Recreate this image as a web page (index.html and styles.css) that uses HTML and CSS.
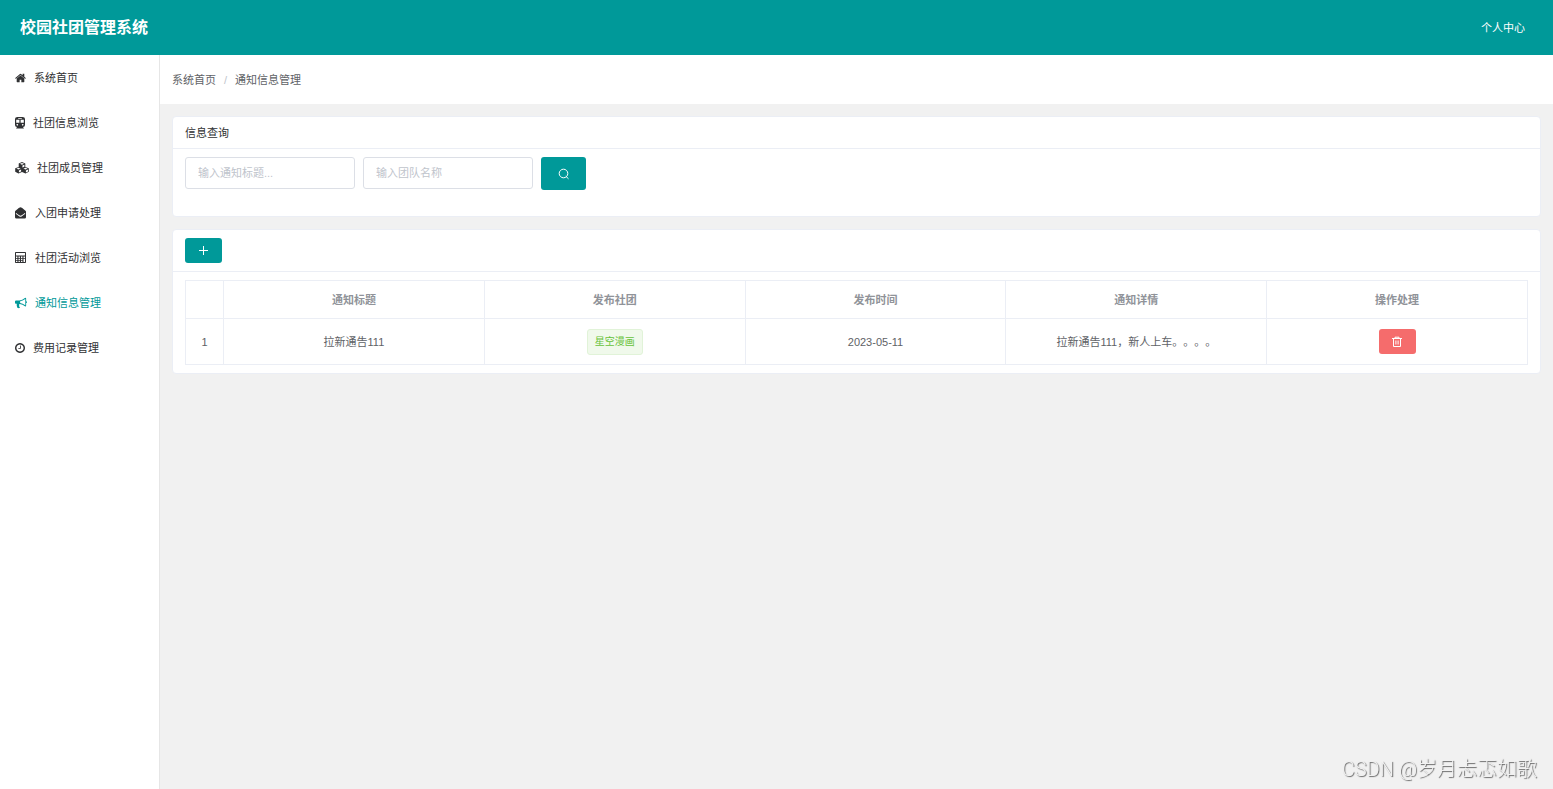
FILE: index.html
```html
<!DOCTYPE html>
<html lang="zh-CN">
<head>
<meta charset="utf-8">
<title>校园社团管理系统</title>
<meta name="viewport" content="width=device-width, initial-scale=1">
<link rel="stylesheet" href="styles.css">
</head>
<body>
<div class="app">
  <header class="topbar">
    <h1 class="brand">校园社团管理系统</h1>
    <a class="profile" href="#">个人中心</a>
  </header>
  <div class="body">
    <nav class="sidebar">
      <a class="item" href="#">
        <svg class="icon" viewBox="64 0 1664 1792" width="11" height="12"><path d="M1472 992v480q0 26-19 45t-45 19h-384v-384h-256v384h-384q-26 0-45-19t-19-45v-480q0-1 .5-3t.5-3l575-474 575 474q1 2 1 6zm223-69l-62 74q-8 9-21 11h-3q-13 0-21-7l-692-577-692 577q-12 8-24 7-13-2-21-11l-62-74q-8-10-7-23.5t11-21.5l719-599q32-26 76-26t76 26l244 204v-195q0-14 9-23t23-9h192q14 0 23 9t9 23v408l219 182q10 8 11 21.5t-7 23.5z"/></svg>
        <span>系统首页</span>
      </a>
      <a class="item" href="#">
        <svg class="icon" viewBox="0 0 10 12" width="10" height="12"><path fill-rule="evenodd" d="M2.500 0h5Q10 0 10 2v6q0 1.800-2 2L9 11.500H1L2 10Q0 9.800 0 8V2Q0 0 2.500 0zM3.200.9v.8h3.600V.9zM1.200 2.800v3h3.200v-3zM5.600 2.800v3h3.200v-3zM2.300 6.900a.8.800 0 1 0 .01 0zM7.700 6.900a.8.800 0 1 0 .01 0z"/></svg>
        <span>社团信息浏览</span>
      </a>
      <a class="item" href="#">
        <svg class="icon" viewBox="0 0 14 12" width="14" height="12"><path fill-rule="evenodd" d="M7 0l3.300 1.400v3.500l3.500 1.400v3.500L10.500 11.500 7 9.900l-3.500 1.600L.2 9.800V6.300l3.500-1.400V1.400zM7 .9L4.900 1.800 7 2.700l2.100-.9zM7.400 3.500v2l2-.8v-2zM3.500 5.800l-2.100.9 2.100.9 2.100-.9zM3.900 8.400v2.100l2.200-1V7.500zM10.500 5.800l-2.100.9 2.100.9 2.100-.9zM10.900 8.400v2.100l2.100-1V7.500z"/></svg>
        <span>社团成员管理</span>
      </a>
      <a class="item" href="#">
        <svg class="icon" viewBox="0 0 12 12" width="12" height="12"><path fill-rule="evenodd" d="M5.500.3Q6.500.3 10.500 3.700q.5.400.5.900v5.600q0 1.300-1.300 1.300H1.400Q0 11.500 0 10.200V4.600q0-.5.500-.9Q4.500.3 5.500.3zM1.200 6l-.5.700Q4.500 9.800 5.500 9.800T10.300 6.700L9.800 6Q6.500 8.700 5.500 8.700T1.200 6z"/></svg>
        <span>入团申请处理</span>
      </a>
      <a class="item" href="#">
        <svg class="icon" viewBox="0 0 12 12" width="12" height="12"><path fill-rule="evenodd" d="M.8 0h9.400q.8 0 .8.800v9.400q0 .8-.8.800H.8Q0 11 0 10.200V.8Q0 0 .8 0zM1 1v2.400h9V1zM1 4.500V6h1.400V4.500zM3.500 4.500V6h1.400V4.500zM6 4.500V6h1.400V4.500zM8.500 4.500V6H10V4.500zM1 6.800v1.400h1.400V6.800zM3.500 6.800v1.400h1.400V6.800zM6 6.800v1.400h1.400V6.800zM1 9v1h1.400V9zM3.500 9v1h1.400V9zM6 9v1h1.400V9zM8.500 6.800V10H10V6.800z"/></svg>
        <span>社团活动浏览</span>
      </a>
      <a class="item active" href="#" aria-current="page">
        <svg class="icon" viewBox="0 0 1792 1792" width="12" height="12"><path d="M1664 640q53 0 90.500 37.500t37.500 90.500-37.500 90.500-90.500 37.500v384q0 52-38 90t-90 38q-417-347-812-380-58 19-91 66t-31 100.500 40 92.500q-20 33-23 65.500t6 58 33.500 55 48 50 61.500 50.500q-29 58-111.500 83t-168.500 11.500-132-55.500q-7-23-29.500-87.500t-32-94.500-23-89-15-101 3.500-98.500 22-110.500h-122q-66 0-113-47t-47-113v-192q0-66 47-113t113-47h480q435 0 896-384 52 0 90 38t38 90v384zm-128 604v-954q-394 302-768 343v270q377 42 768 341z"/></svg>
        <span>通知信息管理</span>
      </a>
      <a class="item" href="#">
        <svg class="icon" viewBox="128 0 1536 1792" width="10" height="12"><path d="M1024 544v448q0 14-9 23t-23 9h-320q-14 0-23-9t-9-23v-64q0-14 9-23t23-9h224v-352q0-14 9-23t23-9h64q14 0 23 9t9 23zm416 352q0-148-73-273t-198-198-273-73-273 73-198 198-73 273 73 273 198 198 273 73 273-73 198-198 73-273zm224 0q0 209-103 385.500t-279.500 279.500-385.500 103-385.500-103-279.500-279.500-103-385.500 103-385.500 279.500-279.500 385.500-103 385.500 103 279.500 279.500 103 385.500z"/></svg>
        <span>费用记录管理</span>
      </a>
    </nav>
    <main class="main">
      <nav class="crumbs" aria-label="面包屑">
        <a href="#">系统首页</a><span class="sep">/</span><span>通知信息管理</span>
      </nav>
      <div class="content">
        <section class="card">
          <h2 class="card-head">信息查询</h2>
          <form class="search">
            <input class="field" type="text" aria-label="通知标题" placeholder="输入通知标题...">
            <input class="field" type="text" aria-label="团队名称" placeholder="输入团队名称">
            <button class="btn find" type="button" aria-label="查询">
              <svg viewBox="0 0 12 12" width="12" height="12" fill="none" stroke="currentColor"><circle cx="5.500" cy="5.500" r="4.300"/><path d="M7.800 8.200l2.700 2.600"/></svg>
            </button>
          </form>
        </section>
        <section class="card">
          <div class="card-head tools">
            <button class="btn small" type="button" aria-label="新增">
              <svg viewBox="0 0 11 11" width="11" height="11" fill="none" stroke="currentColor"><path d="M5.500 1v9M1 5.500h9"/></svg>
            </button>
          </div>
          <div class="card-body">
            <table class="grid">
              <thead>
                <tr><th class="num" aria-label="序号"></th><th>通知标题</th><th>发布社团</th><th>发布时间</th><th>通知详情</th><th>操作处理</th></tr>
              </thead>
              <tbody>
                <tr>
                  <td>1</td>
                  <td>拉新通告111</td>
                  <td><span class="tag">星空漫画</span></td>
                  <td>2023-05-11</td>
                  <td>拉新通告111，新人上车。。。。</td>
                  <td>
                    <button class="btn small danger" type="button" aria-label="删除">
                      <svg viewBox="0 0 12 12" width="12" height="12" fill="none" stroke="currentColor"><path d="M1 2.500h10M4 2.500v-1.300h4v1.300M2.500 2.500v8h7v-8M4.900 4.500v4M7.100 4.500v4"/></svg>
                    </button>
                  </td>
                </tr>
              </tbody>
            </table>
          </div>
        </section>
      </div>
    </main>
  </div>
  <div class="watermark">CSDN @岁月忐忑如歌</div>
</div>
</body>
</html>
```
FILE: styles.css
```css
* {
  box-sizing: border-box;
}

body {
  margin: 0;
  background: #f1f1f1;
  color: #303133;
  font: 11px/16px "Liberation Sans", "Noto Sans CJK SC", sans-serif;
  text-spacing-trim: space-all;
}

a {
  color: inherit;
  text-decoration: none;
}

svg {
  display: block;
}

.app {
  display: flex;
  flex-direction: column;
  min-height: 100vh;
}

.topbar {
  display: flex;
  align-items: center;
  justify-content: space-between;
  height: 55px;
  padding: 0 28px 0 20px;
  background: #009999;
  color: #fff;
}

.brand {
  margin: 0;
  font-size: 16px;
  line-height: 24px;
}

.body {
  display: flex;
  flex: 1;
}

.sidebar {
  flex: 0 0 160px;
  border-right: 1px solid #e6e6e6;
  background: #fff;
}

.item {
  display: flex;
  align-items: center;
  gap: 8px;
  height: 45px;
  padding: 0 15px;
}

.active {
  color: #009999;
}

.icon {
  fill: currentColor;
}

.main {
  flex: 1;
  min-width: 0;
}

.crumbs {
  display: flex;
  align-items: center;
  height: 49px;
  padding: 0 12px;
  background: #fff;
  color: #606266;
}

.sep {
  padding: 0 8px;
  color: #c0c4cc;
}

.content {
  display: grid;
  gap: 12px;
  padding: 12px;
}

.card {
  border: 1px solid #ebeef5;
  border-radius: 4px;
  background: #fff;
}

.card-head {
  margin: 0;
  padding: 8px 12px 7px;
  border-bottom: 1px solid #ebeef5;
  font-size: 11px;
  font-weight: 400;
}

.tools {
  padding: 8px 12px;
}

.search {
  display: flex;
  gap: 8px;
  padding: 8px 12px 26px;
}

.field {
  width: 170px;
  height: 32px;
  padding: 0 12px;
  border: 1px solid #dcdfe6;
  border-radius: 3px;
  background: #fff;
  color: #606266;
  font: inherit;
}

.field::placeholder {
  color: #c0c4cc;
  opacity: 1;
}

.btn {
  display: inline-flex;
  align-items: center;
  justify-content: center;
  padding: 0;
  border: 0;
  border-radius: 3px;
  background: #009999;
  color: #fff;
  vertical-align: top;
}

.find {
  width: 45px;
  height: 33px;
}

.small {
  width: 37px;
  height: 25px;
}

.danger {
  background: #f56c6c;
}

.tools .btn {
  display: flex;
}

.card-body {
  padding: 8px 12px;
}

.grid {
  width: 100%;
  table-layout: fixed;
  border-collapse: collapse;
  color: #606266;
  text-align: center;
}

.grid th,
.grid td {
  padding: 0;
  border: 1px solid #ebeef5;
}

.grid th {
  height: 38px;
  color: #909399;
}

.grid td {
  height: 46px;
}

.grid .num {
  width: 38px;
}

.tag {
  display: inline-block;
  padding: 0 7px;
  border: 1px solid #e1f3d8;
  border-radius: 3px;
  background: #f0f9eb;
  color: #67c23a;
  font-size: 10px;
  line-height: 24px;
  vertical-align: top;
}

.watermark {
  position: fixed;
  right: 16px;
  bottom: 6px;
  color: #f1f1f1;
  font-family: Roboto, "Noto Sans CJK SC", sans-serif;
  font-size: 20px;
  line-height: 28px;
  font-weight: 300;
  text-shadow: 1px 1px 1px #666;
  pointer-events: none;
}
```
